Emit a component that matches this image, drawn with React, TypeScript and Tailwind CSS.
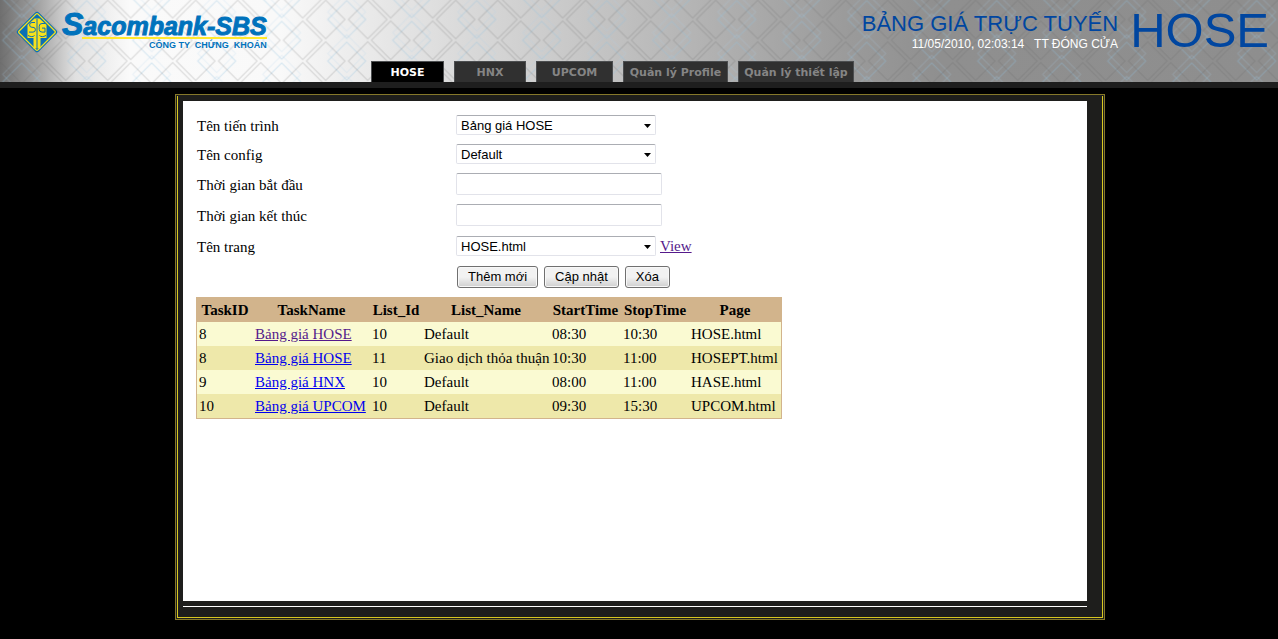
import type { ReactNode } from "react";

const tabs = [
  { label: "HOSE", width: "w-[73px]", active: true },
  { label: "HNX", width: "w-[72px]", active: false },
  { label: "UPCOM", width: "w-[77px]", active: false },
  { label: "Quản lý Profile", width: "w-[105px]", active: false },
  { label: "Quản lý thiết lập", width: "w-[116px]", active: false },
];

const columns = [
  { name: "TaskID", width: "w-[56px]" },
  { name: "TaskName", width: "w-[117px]" },
  { name: "List_Id", width: "w-[52px]" },
  { name: "List_Name", width: "w-[128px]" },
  { name: "StartTime", width: "w-[71px]" },
  { name: "StopTime", width: "w-[68px]" },
  { name: "Page", width: "w-[92px]" },
];

const tasks = [
  { id: 8, name: "Bảng giá HOSE", visited: true, list: 10, listName: "Default", start: "08:30", stop: "10:30", page: "HOSE.html" },
  { id: 8, name: "Bảng giá HOSE", visited: false, list: 11, listName: "Giao dịch thỏa thuận", start: "10:30", stop: "11:00", page: "HOSEPT.html" },
  { id: 9, name: "Bảng giá HNX", visited: false, list: 10, listName: "Default", start: "08:00", stop: "11:00", page: "HASE.html" },
  { id: 10, name: "Bảng giá UPCOM", visited: false, list: 10, listName: "Default", start: "09:30", stop: "15:30", page: "UPCOM.html" },
];

/** One lattice cluster: two grey diamonds side by side with blue ones over the join. */
function Cluster({ x, y }: { x: number; y: number }) {
  return (
    <g transform={`translate(${x} ${y})`} fill="none" strokeLinejoin="round" strokeWidth="1.2">
      <path d="M0-26.5 19-7.5 0 11.5-19-7.5Z" stroke="#a8cfe8" strokeOpacity="0.18" />
      <path d="M0-19 19 0 0 19-19 0Z" stroke="#8fc0e0" strokeOpacity="0.3" />
      <path d="M-21-19.3-1.7 0-21 19.3-40.3 0Z" stroke="#606060" strokeOpacity="0.18" />
      <path d="M21-19.3 40.3 0 21 19.3 1.7 0Z" stroke="#606060" strokeOpacity="0.18" />
    </g>
  );
}

function Lattice() {
  return (
    <svg className="absolute inset-0 h-full w-full" aria-hidden="true">
      <defs>
        <pattern id="lattice" x="21.7" y="-1.3" width="130" height="41.6" patternUnits="userSpaceOnUse">
          <Cluster x={65} y={20.8} />
          <Cluster x={65} y={62.4} />
          <Cluster x={0} y={0} />
          <Cluster x={130} y={0} />
          <Cluster x={0} y={41.6} />
          <Cluster x={130} y={41.6} />
        </pattern>
      </defs>
      <rect width="100%" height="100%" fill="url(#lattice)" />
    </svg>
  );
}

function Emblem() {
  return (
    <svg width="42" height="42" viewBox="0 0 42 42" className="shrink-0" aria-hidden="true">
      <rect x="6" y="6" width="30" height="30" rx="2.5" transform="rotate(45 21 21)" fill="#0a6fb5" />
      <rect x="7.6" y="7.6" width="26.8" height="26.8" rx="1.5" transform="rotate(45 21 21)" fill="none" stroke="#f7e11c" strokeWidth="1.3" />
      <path d="M11.500 14 18.500 7.500h5L30.500 14v13h-6v10.500h-7V27h-6Z" fill="#f7e11c" />
      <path
        d="M19 11.500h-3a2.400 2.400 0 0 0 0 4.800h1a2.400 2.400 0 0 1 0 4.800h-4M29 12.500h-3a2.800 2.800 0 0 0-2.800 2.800v3a2.800 2.800 0 0 0 2.800 2.800h3v-4h-3M21 8v30M12 24.500c3 1.500 5 1.500 6.500 0M23.500 24.500c1.500 1.500 3.500 1.500 6.500 0"
        fill="none"
        stroke="#0a6fb5"
        strokeWidth="1"
      />
    </svg>
  );
}

function Logo() {
  return (
    <div className="flex pl-4 pt-[11px] text-[#0072bc]">
      <Emblem />
      <div className="ml-1 font-bold">
        <div className="h-[26px] whitespace-nowrap leading-[26px] italic [-webkit-text-stroke:1px_#0072bc]">
          <span className="text-[32px]">S</span>
          <span className="text-[25px]">acombank-SBS</span>
        </div>
        <div className="ml-5 h-[2px] bg-[#ffe92e]" />
        <div className="whitespace-pre text-right text-[9px] leading-[12px]">CÔNG TY  CHỨNG  KHOÁN</div>
      </div>
    </div>
  );
}

function Header() {
  return (
    <header className="relative border-b-[6px] border-[#1e1e1e] bg-[linear-gradient(90deg,#6f6f6f_0px,#a2a2a2_38px,#e0e0e0_75px,#fafafa_130px,#f9f9f9_280px,#e4e4e4_400px,#b8b8b8_670px,#9a9a9a_850px,#8f8f8f_940px,#8e8e8e_100%)] font-['Liberation_Sans',Arial,sans-serif]">
      <Lattice />
      <div className="relative flex h-[61px] justify-between">
        <Logo />
        <div className="flex gap-3 pr-[9px] text-[#0046a0]">
          <div className="pt-[10px] text-right">
            <h1 className="text-[22px] leading-[27px]">BẢNG GIÁ TRỰC TUYẾN</h1>
            <p className="whitespace-pre text-[12px] leading-[15px] text-white">11/05/2010, 02:03:14   TT ĐÓNG CỬA</p>
          </div>
          <div className="pt-[2px] text-[49px] leading-[56px]">HOSE</div>
        </div>
      </div>
      <nav className="relative flex gap-[10px] pl-[371px] font-['DejaVu_Sans',Verdana,sans-serif] text-[11px] font-bold">
        {tabs.map((tab) => (
          <a
            key={tab.label}
            href="#"
            className={`${tab.width} ${tab.active ? "bg-black text-white" : "bg-[#303030] text-[#858585]"} flex h-[21px] items-center justify-center whitespace-nowrap border border-b-0 border-[#4c4e50] pt-[3px]`}
          >
            {tab.label}
          </a>
        ))}
      </nav>
    </header>
  );
}

const control =
  "rounded-[2px] border border-[#e2e3ea] border-t-[#abadb3] bg-white font-['Liberation_Sans',Arial,sans-serif] text-[13px] text-black";

function Select({ id, options }: { id: string; options: string[] }) {
  return (
    <div className="relative h-5 w-[200px]">
      <select id={id} className={`${control} block h-5 w-full appearance-none pl-1 pr-5 pt-[2px] leading-[16px]`}>
        {options.map((option) => (
          <option key={option}>{option}</option>
        ))}
      </select>
      <svg width="7" height="4" viewBox="0 0 7 4" className="pointer-events-none absolute right-[5px] top-[9px]" aria-hidden="true">
        <path d="M0 0h7L3.500 4Z" fill="#000" />
      </svg>
    </div>
  );
}

function Field({ id, label, children }: { id: string; label: string; children: ReactNode }) {
  return (
    <>
      <label htmlFor={id} className="pl-[1px] pt-[2px]">
        {label}
      </label>
      {children}
    </>
  );
}

function Button({ children }: { children: ReactNode }) {
  return (
    <button
      type="button"
      className="h-[22px] rounded-[3px] border border-[#707070] bg-linear-to-b from-[#f2f2f2] from-50% to-[#cfcfcf] px-[10px] font-['Liberation_Sans',Arial,sans-serif] text-[13px] leading-[20px] shadow-[inset_0_0_0_1px_#f8f8f8]"
    >
      {children}
    </button>
  );
}

function TaskForm() {
  return (
    <form className="grid auto-rows-min grid-cols-[260px_1fr] items-center gap-y-[9px] leading-[18px]">
      <Field id="process" label="Tên tiến trình">
        <Select id="process" options={["Bảng giá HOSE", "Bảng giá HNX", "Bảng giá UPCOM"]} />
      </Field>
      <Field id="config" label="Tên config">
        <Select id="config" options={["Default", "Giao dịch thỏa thuận"]} />
      </Field>
      <Field id="start" label="Thời gian bắt đầu">
        <input id="start" type="text" className={`${control} h-[22px] w-[206px] px-1`} />
      </Field>
      <Field id="stop" label="Thời gian kết thúc">
        <input id="stop" type="text" className={`${control} h-[22px] w-[206px] px-1`} />
      </Field>
      <Field id="page" label="Tên trang">
        <div className="flex h-[22px] items-center gap-1">
          <Select id="page" options={["HOSE.html", "HOSEPT.html", "HASE.html", "UPCOM.html"]} />
          <a href="#" className="text-[#551a8b] underline">
            View
          </a>
        </div>
      </Field>
      <div className="col-start-2 flex gap-[6px] pl-[1px]">
        <Button>Thêm mới</Button>
        <Button>Cập nhật</Button>
        <Button>Xóa</Button>
      </div>
    </form>
  );
}

function TaskTable() {
  return (
    <table className="mt-[9px] w-[586px] table-fixed border-separate border-spacing-0 border border-[#d2b48c]">
      <thead className="bg-[#d2b48c]">
        <tr className="h-6">
          {columns.map((column) => (
            <th key={column.name} className={`${column.width} whitespace-nowrap px-[2px] py-0 text-center font-bold`}>
              {column.name}
            </th>
          ))}
        </tr>
      </thead>
      <tbody>
        {tasks.map((task, index) => (
          <tr key={index} className="h-6 whitespace-nowrap odd:bg-[#fafad2] even:bg-[#eee8aa]">
            <td className="px-[2px] py-0">{task.id}</td>
            <td className="px-[2px] py-0">
              <a href="#" className={`${task.visited ? "text-[#551a8b]" : "text-[#0000ee]"} underline`}>
                {task.name}
              </a>
            </td>
            <td className="px-[2px] py-0">{task.list}</td>
            <td className="px-[2px] py-0">{task.listName}</td>
            <td className="px-[2px] py-0">{task.start}</td>
            <td className="px-[2px] py-0">{task.stop}</td>
            <td className="px-[2px] py-0">{task.page}</td>
          </tr>
        ))}
      </tbody>
    </table>
  );
}

export default function App() {
  return (
    <div className="min-h-screen bg-black">
      <Header />
      <main className="pb-4 pl-[2px] pt-[6px]">
        <div className="mx-auto max-w-[930px] border border-[#85782a] bg-[#1e1e1c] p-[1px]">
          <div className="border-x border-b border-[#d8c820] pb-[10px] pl-[5px] pr-[15px] pt-[5px]">
            <section className="min-h-[500px] bg-white px-[13px] py-[14px] font-['Liberation_Serif','Times_New_Roman',serif] text-[15px] leading-[20px] text-black">
              <TaskForm />
              <TaskTable />
            </section>
            <div className="mt-[5px] h-px bg-white" />
          </div>
        </div>
      </main>
    </div>
  );
}
